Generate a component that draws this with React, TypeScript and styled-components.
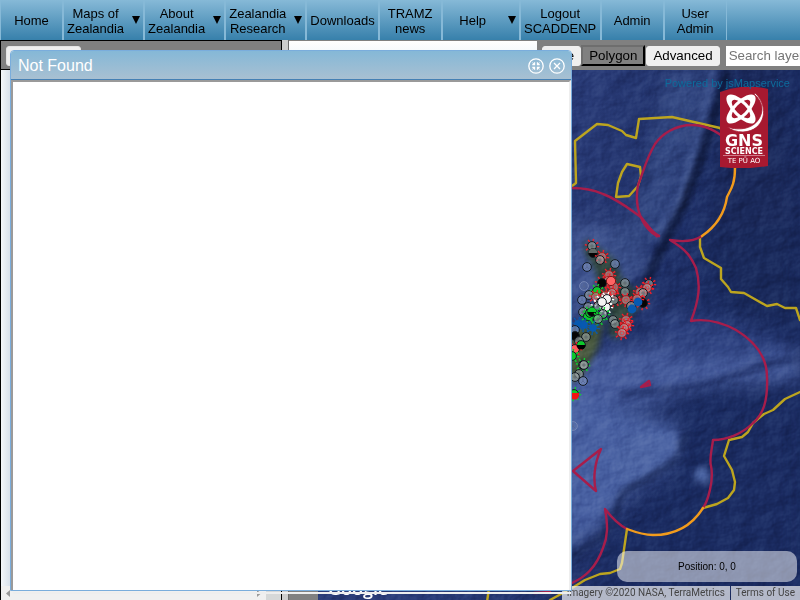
import React from "react";
import styled, { createGlobalStyle, css } from "styled-components";

const GlobalStyle = createGlobalStyle`
  *, *::before, *::after { box-sizing: border-box; }
  html, body, #root { height: 100%; }
  body {
    margin: 0;
    overflow: hidden;
    font-family: "Liberation Sans", Arial, sans-serif;
    font-size: 13px;
    color: #000;
  }
  button, input { font-family: inherit; }
`;

const Page = styled.div`
  position: relative;
  display: flex;
  flex-direction: column;
  height: 100vh;
  overflow: hidden;
  background: #808080;
`;

/* ---------- navigation ---------- */

const NavBar = styled.nav`
  flex: none;
  height: 40px;
  background: linear-gradient(#86b9d7, #3780ab);
`;

const NavList = styled.ul`
  display: flex;
  height: 100%;
  margin: 0;
  padding: 0;
  list-style: none;
`;

const NavItem = styled.li<{ $min?: number }>`
  min-width: ${(p) => p.$min ?? 63}px;
  border: solid #86b9d7;
  border-width: 0 1px;
`;

const NavLink = styled.a`
  display: flex;
  align-items: center;
  height: 100%;
  padding: 2px 3px 1px;
  color: #000;
  line-height: 15px;
  text-decoration: none;
`;

const NavLabel = styled.span`
  flex: 1;
  text-align: center;
  white-space: pre;
`;

const NavArrow = styled.svg`
  flex: none;
  width: 8px;
  height: 8px;
  margin: 0 0 1px 8px;
`;

/* ---------- workspace ---------- */

const Workspace = styled.main`
  flex: 1;
  display: flex;
  min-height: 0;
`;

const LayerPanel = styled.aside`
  flex: 0 0 282px;
  display: flex;
  flex-direction: column;
  border: solid #000;
  border-width: 1px 1px 0 1px;
`;

const PanelHeader = styled.div`
  flex: none;
  height: 29px;
  padding: 5px;
  border-bottom: 1px solid #000;
  background: #808080;
`;

const PanelButton = styled.button`
  width: 75px;
  height: 20px;
  border: 1px solid #e4e4e4;
  border-radius: 3px;
  background: #efefef;
`;

const PanelBody = styled.div`
  flex: 1;
  background: linear-gradient(90deg, #f4f7fa, #cfdae6 12px, #f4f7fa);
`;

const ScrollTrack = styled.div`
  flex: none;
  display: flex;
  align-items: center;
  justify-content: space-between;
  height: 14px;
  padding-left: 5px;
  background: linear-gradient(90deg, #f0f0f0 265px, #d6d8d8 265px);
`;

const ScrollArrow = styled.svg<{ $end?: boolean }>`
  width: 4px;
  height: 7px;
  margin-right: ${(p) => (p.$end ? 20 : 0)}px;
`;

const Splitter = styled.div`
  flex: 0 0 7px;
  border-right: 1px solid #6b6b6b;
  background: #cdcdcd;
`;

const MapColumn = styled.section`
  flex: 1;
  display: flex;
  flex-direction: column;
  min-width: 0;
`;

const Toolbar = styled.div`
  flex: none;
  display: flex;
  align-items: center;
  height: 30px;
  overflow: hidden;
  border-top: 1px solid #808080;
  background: #808080;
`;

const LayerSummary = styled.div`
  flex: none;
  align-self: stretch;
  width: 248px;
  margin-right: 5px;
  background: linear-gradient(#fff, #e2edf6);
`;

const ToolButton = styled.button<{ $pressed?: boolean }>`
  flex: none;
  height: 20px;
  padding: 0 6px;
  border: 1px solid #efefef;
  border-radius: 3px;
  background: #efefef;
  color: #000;
  ${(p) =>
    p.$pressed &&
    css`
      height: 21px;
      margin-right: 1px;
      border: 2px outset #666;
      border-color: #6e6e6e #222 #222 #6e6e6e;
      border-radius: 0;
      background: #808080;
    `}
`;

const SearchInput = styled.input`
  flex: none;
  width: 160px;
  height: 20px;
  margin-left: 6px;
  padding: 0 2px;
  border: 1px solid #fff;
  background: #fff;
  &::placeholder { color: #757575; }
`;

const MapRow = styled.div`
  flex: 1;
  display: flex;
  min-height: 0;
`;

const SideStrip = styled.div`
  flex: 0 0 29px;
  background: #808080;
`;

const MapView = styled.div`
  position: relative;
  flex: 1;
  overflow: hidden;
  background: #1c2c62;
`;

const MapSvg = styled.svg`
  position: absolute;
  inset: 0;
  width: 100%;
  height: 100%;
`;

const PoweredBy = styled.a`
  position: absolute;
  top: 7px;
  right: 10px;
  color: #0d6c9c;
  font-size: 11px;
  line-height: 13px;
  text-decoration: none;
`;

const LogoSvg = styled.svg`
  position: absolute;
  top: 17px;
  right: 32px;
  width: 48px;
  height: 81px;
`;

const GoogleMark = styled.span`
  position: absolute;
  left: 10px;
  bottom: 0;
  color: #fff;
  font: 600 18px/24px "Open Sans", sans-serif;
`;

const PositionBox = styled.div`
  position: absolute;
  right: 3px;
  bottom: 18px;
  width: 180px;
  border-radius: 10px;
  background: rgba(255, 255, 255, 0.5);
  font-size: 10px;
  line-height: 31px;
  text-align: center;
`;

const Attribution = styled.div`
  position: absolute;
  right: 0;
  bottom: 0;
  display: flex;
  gap: 1px;
  color: #444;
  font: 10px/14px Roboto, sans-serif;
  white-space: nowrap;
`;

const AttributionPart = styled.span`
  padding: 0 5px;
  background: rgba(245, 245, 245, 0.7);
`;

const TermsLink = styled.a`
  color: inherit;
  text-decoration: none;
`;

/* ---------- dialog ---------- */

const Dialog = styled.section`
  position: absolute;
  inset: 50px 228px 9px 10px;
  display: flex;
  flex-direction: column;
  border: 1px solid #7aaddc;
  border-radius: 4px 4px 0 0;
  background: #fff;
  &::after {
    content: "";
    position: absolute;
    top: calc(100% + 2px);
    left: 2px;
    right: 0;
    height: 2px;
    background: #eee;
  }
`;

const DialogTitle = styled.header`
  flex: none;
  display: flex;
  align-items: center;
  gap: 5px;
  height: 29px;
  padding: 2px 6px 0 7px;
  border-bottom: 1px solid #4580b4;
  border-radius: 3px 3px 0 0;
  background: linear-gradient(#85b8d7, #a8c0d2);
`;

const Heading = styled.h1`
  flex: 1;
  margin: 0;
  color: #fff;
  font-size: 16px;
  font-weight: 400;
  line-height: 18px;
`;

const IconButton = styled.button`
  display: flex;
  padding: 0;
  border: 0;
  background: none;
`;

const DialogBody = styled.div`
  flex: 1;
  border: solid;
  border-width: 2px 2px 0 2px;
  border-color: #9a9a9a #eee #eee #9a9a9a;
`;

const navItems: { label: string; menu?: boolean; min?: number }[] = [
  { label: "Home" },
  { label: "Maps of\nZealandia", menu: true },
  { label: "About\nZealandia", menu: true },
  { label: "Zealandia\nResearch", menu: true },
  { label: "Downloads" },
  { label: "TRAMZ\nnews" },
  { label: "Help", menu: true, min: 78 },
  { label: "Logout\nSCADDENP", min: 81 },
  { label: "Admin" },
  { label: "User\nAdmin" },
];

/* ---------- map drawing ---------- */

type Kind = "grey" | "pink" | "black" | "green" | "blue" | "white" | "ring" | "red" | "faint";
type Marker = [number, number, Kind, string?];

const fills: Record<Kind, string> = {
  grey: "rgba(160,170,170,.6)",
  pink: "rgba(190,160,160,.65)",
  black: "#050505",
  green: "#0dc92c",
  blue: "#0759b0",
  white: "#f3f3f3",
  ring: "rgba(125,145,190,.65)",
  red: "#ff5a5a",
  faint: "rgba(110,130,180,.3)",
};

const markers: Marker[] = [
  [592, 246, "grey", "red"], [593, 253, "black"], [602, 257, "pink", "red"], [600, 260, "grey"],
  [587, 267, "ring"], [615, 264, "ring"], [584, 286, "faint"], [609, 275, "pink", "red"],
  [608, 281, "pink", "red"], [602, 283, "black", "red"], [614, 287, "pink", "red"],
  [612, 293, "pink", "red"], [625, 283, "grey"], [625, 292, "grey"], [589, 295, "grey"],
  [597, 291, "green", "green"], [596, 297, "pink", "red"], [582, 300, "ring"], [605, 296, "pink", "red"],
  [614, 300, "grey", "red"], [626, 300, "pink", "red"], [649, 284, "grey", "red"],
  [647, 288, "pink", "red"], [640, 292, "pink", "red"], [643, 293, "grey"],
  [643, 303, "black", "red"], [637, 299, "pink", "red"], [631, 306, "grey"],
  [588, 307, "grey"], [583, 312, "grey"], [606, 307, "white", "white"], [601, 302, "white", "white"],
  [607, 299, "white", "white"], [598, 306, "grey", "white"], [602, 302, "white"],
  [588, 316, "green", "green"], [590, 313, "green", "green"], [596, 316, "green", "green"],
  [592, 312, "black"], [603, 314, "grey", "green"],
  [598, 319, "grey", "green"], [613, 320, "grey"], [615, 324, "grey"], [626, 320, "pink", "red"],
  [627, 325, "pink", "red"], [624, 328, "pink", "red"], [622, 333, "pink", "red"],
  [578, 324, "blue", "blue"], [584, 325, "blue", "blue"], [593, 328, "blue", "blue"],
  [575, 330, "ring"], [575, 336, "black"], [586, 337, "grey"], [579, 341, "grey"],
  [581, 345, "green"], [575, 349, "red", "red"], [572, 356, "green", "green"],
  [583, 365, "grey", "green"], [584, 365, "grey"], [579, 374, "grey"], [575, 377, "grey"],
  [583, 381, "ring"], [574, 394, "green", "green"], [573, 426, "faint"],
];

const rayColors: Record<string, string> = {
  red: "#f51f2b", green: "#0ad42f", white: "#fff", blue: "#0759b0",
};

const MarkerDot = ({ marker }: { marker: Marker }) => {
  const [x, y, kind, rays] = marker;
  return (
    <g transform={`translate(${x} ${y})`}>
      {rays && (
        <circle r="5.5" fill="none" stroke={rayColors[rays]} strokeWidth="3.5" strokeDasharray="1.2 3.12" />
      )}
      <circle
        r={kind === "blue" ? 3.4 : 4.4}
        fill={fills[kind]}
        stroke={kind === "blue" ? "#0759b0" : kind === "faint" ? "#7384b3" : kind === "pink" ? "#b3161c" : "#131a22"}
        strokeWidth="1"
      />
      {kind === "grey" && <path d="M-2 0h4M0-2v4" stroke="#596267" strokeWidth=".7" />}
      {kind === "pink" && <circle r="2" fill="none" stroke="#e53438" strokeWidth=".8" />}
      {(kind === "faint" || kind === "ring") && (
        <path d="M0-2.5v2.5l-2 2M0 0l2 2" fill="none" stroke="#56658e" strokeWidth=".7" />
      )}
    </g>
  );
};

const Relief = styled.rect`
  mix-blend-mode: soft-light;
`;

const MapDrawing = () => (
  <MapSvg viewBox="318 70 482 530" preserveAspectRatio="xMaxYMin slice" aria-label="Satellite map of Zealandia">
    <defs>
      <filter id="soft" x="-40%" y="-40%" width="180%" height="180%" colorInterpolationFilters="sRGB">
        <feGaussianBlur stdDeviation="9" />
      </filter>
      <filter id="edge" x="-40%" y="-40%" width="180%" height="180%" colorInterpolationFilters="sRGB">
        <feGaussianBlur stdDeviation="3" />
      </filter>
      <filter id="relief" x="0" y="0" width="100%" height="100%" colorInterpolationFilters="sRGB">
        <feTurbulence type="fractalNoise" baseFrequency="0.04 0.05" numOctaves="5" seed="23" />
        <feColorMatrix values="0 0 0 0 0  0 0 0 0 0  0 0 0 0 0  1 0 0 0 0" />
        <feDiffuseLighting surfaceScale="4" lightingColor="#fff">
          <feDistantLight azimuth="215" elevation="29" />
        </feDiffuseLighting>
      </filter>
      <linearGradient id="sea" x2="1" y2="0.3">
        <stop offset=".5" stopColor="#2a3c78" />
        <stop offset=".9" stopColor="#1b2c62" />
      </linearGradient>
    </defs>

    <rect x="318" y="70" width="482" height="530" fill="url(#sea)" />
    <g filter="url(#soft)">
      <path d="M560 215L620 230 650 260 610 300 560 320Z" fill="#415691" />
      <path d="M668 70h40l-18 70-24 76-38 50-22-20 40-60Z" fill="#354a84" />
      <path d="M738 60l40 0 30 200-70 10-30-60Z" fill="#1b2a5c" />
      <path d="M610 350l80-10 110 12v28l-100 8-60 20-80-10v-40Z" fill="#465c9c" />
      <path d="M640 310l90 10 70 30-120 10Z" fill="#2e4280" />
      <path d="M560 385l60 25 60 15-6 40-48 30-22 30-44 30Z" fill="#4a62a3" />
      <path d="M690 410l110-20v220H600l14-76 60-40Z" fill="#1b2c62" />
      <path d="M700 240l100-20v100l-60 0Z" fill="#1a2a5c" />
    </g>
    <g filter="url(#edge)">
      <circle cx="702" cy="475" r="8" fill="#4d66a4" />
      <path d="M728 70l-12 40-16 52-16 42-20 40-18 38" fill="none" stroke="#0d1738" strokeWidth="7" />
      <path d="M713 70l-14 62-20 66-26 42" fill="none" stroke="#435994" strokeWidth="7" />
      <path d="M688 432l-14 30-22 14-28 16-18 40-34 26" fill="none" stroke="#14224d" strokeWidth="4" />
      <path d="M625 430l50 2 4 20-24 18-30 14-12-20Z" fill="#4d65a4" />
      <path d="M620 394l50-4 40-6 50-18 40-8" fill="none" stroke="#22336a" strokeWidth="6" />
    </g>
    <path
      d="M586 239l14 10 14 10 8 20 14 12 14-10-4 18-14 16-14 24-10-4 2-20-10-18-4-24-12-22Z"
      fill="#30463f" filter="url(#edge)"
    />
    <path d="M604 322l-6 26-16 28-14 8v-50l18-14Z" fill="#46563c" filter="url(#edge)" />
    <Relief x="318" y="70" width="482" height="530" filter="url(#relief)" opacity=".28" />

    <g fill="none" strokeWidth="2.4" strokeLinejoin="round" strokeLinecap="round">
      <g stroke="#bda51f">
        <path d="M572 186l4-3-1-42 22-17 11 1 14 6 4 4 10 3 3-19 33-2 48 11 15 20v20" />
        <path d="M627 164l13 3 1 9-3 10-9 10-13 1 2-14 4-11Z" />
        <path d="M702 236l-2 2v9l4 11 17 10v11l7 8 3 5 13 1 23 13 10-2 8 4h11l4 12" />
        <path d="M800 392l-15 7-12 11-9 4-11 9-5 9-6 5-13 3-5 16 8 14 3 12-1 8-6 8-11 6-14 4" />
        <path d="M627 529l-5 34-2 6-10 4-10 1-15 6-13 8-22 12M489 588l-2 14" />
      </g>
      <g stroke="#a71d4b">
        <path d="M728 141C714 128 703 125 692 125C675 125 662 134 655 144C646 159 643 173 638 185C635 202 639 216 645 225C650 232 654 235 659 236" />
        <path d="M572 188C586 188 594 190 603 194C617 199 631 210 641 217L653 232 659 236" />
        <path d="M702 236C693 242 682 242 670 240C687 250 691 257 696 268C701 285 699 300 691 321C708 318 723 323 736 330C759 344 767 361 767 377C768 402 763 414 753 423C742 434 727 440 713 440C712 449 709 459 711 466C714 480 708 501 703 508" />
        <path d="M627 529C619 525 612 518 605 509C608 526 608 536 603 548C596 568 585 577 572 583" />
        <path d="M601 449l-28 22 23 20C593 480 594 464 601 449ZM641 387l8-6 1 4ZM534 593l16-1" />
        <path d="M646 225l11 11" strokeWidth="3" />
      </g>
      <g stroke="#f29b1c">
        <path d="M735 168C735 184 731 189 727 197C725 211 718 225 702 236" />
        <path d="M703 508C691 527 673 535 653 535C643 535 635 532 627 529" />
      </g>
    </g>

    {markers.map((m, i) => (
      <MarkerDot key={i} marker={m} />
    ))}
    <circle cx="611" cy="281" r="4.6" fill="#ff6464" stroke="#7c1216" />
    <circle cx="638" cy="302" r="4.4" fill="#0759b0" />
    <circle cx="632" cy="309" r="4.4" fill="#0759b0" />
    <path d="M587.500 312a4.500 4.500 0 0 1 9 0Z" fill="#0dc92c" />
    <path d="M576.500 345a4.500 4.500 0 0 0 9 0Z" fill="#000" />
    <path d="M588.500 253a4.500 4.500 0 0 1 9 0Z" fill="#626a68" />
    <path d="M570 393h9v2a4.500 4.500 0 0 1-9 0Z" fill="#f01414" />
  </MapSvg>
);

const ribbon = "M-19 0a19 8 0 1 0 38 0a19 8 0 1 0-38 0ZM-12 0a12 5 0 1 1 24 0a12 5 0 1 1-24 0Z";

const GnsLogo = () => (
  <LogoSvg viewBox="0 0 48 81" role="img" aria-label="GNS Science">
    <path d="M0 5Q24-4 48 2V79Q24 83 0 80Z" fill="#a71930" />
    <g fill="#fff" fillRule="evenodd">
      <path d={ribbon} transform="translate(21 22) rotate(45)" />
      <path d={ribbon} transform="translate(21 22) rotate(-45)" />
    </g>
    <path d="M35 6C50 20 45 44 23 45C17 45 11 43 7 40C20 44 34 42 40 30C44 22 42 14 34 7Z" fill="#fff" stroke="#a71930" strokeWidth=".8" />
    <g fill="#fff" textAnchor="middle" fontFamily="DejaVu Sans, sans-serif" fontWeight="700">
      <text x="24" y="59" fontSize="16">GNS</text>
      <text x="24" y="67" fontSize="8">SCIENCE</text>
      <text x="24" y="76" fontSize="7" fontWeight="400">TE PŪ AO</text>
    </g>
    <path d="M3 68.500h42" stroke="#e2a6b0" strokeWidth=".7" />
  </LogoSvg>
);

export default function App() {
  return (
    <Page>
      <GlobalStyle />
      <NavBar>
        <NavList>
          {navItems.map((item) => (
            <NavItem key={item.label} $min={item.min}>
              <NavLink href="#">
                <NavLabel>{item.label}</NavLabel>
                {item.menu && (
                  <NavArrow viewBox="0 0 8 8" aria-hidden="true">
                    <path d="M0 0h8L4 8Z" />
                  </NavArrow>
                )}
              </NavLink>
            </NavItem>
          ))}
        </NavList>
      </NavBar>

      <Workspace>
        <LayerPanel>
          <PanelHeader>
            <PanelButton type="button" aria-label="Layers" />
          </PanelHeader>
          <PanelBody />
          <ScrollTrack>
            <ScrollArrow viewBox="0 0 4 7" aria-hidden="true">
              <path d="M4 0v7L0 3.500Z" fill="#999" />
            </ScrollArrow>
            <ScrollArrow $end viewBox="0 0 4 7" aria-hidden="true">
              <path d="M0 0v7l4-3.500Z" fill="#999" />
            </ScrollArrow>
          </ScrollTrack>
        </LayerPanel>
        <Splitter />
        <MapColumn>
          <Toolbar>
            <LayerSummary />
            <ToolButton type="button">Line</ToolButton>
            <ToolButton type="button" $pressed aria-pressed="true">Polygon</ToolButton>
            <ToolButton type="button">Advanced</ToolButton>
            <SearchInput type="text" placeholder="Search layers" aria-label="Search layers" />
          </Toolbar>
          <MapRow>
            <SideStrip />
            <MapView>
              <MapDrawing />
              <GnsLogo />
              <PoweredBy href="#">Powered by jsMapservice</PoweredBy>
              <GoogleMark>Google</GoogleMark>
              <PositionBox>Position: 0, 0</PositionBox>
              <Attribution>
                <AttributionPart>Imagery ©2020 NASA, TerraMetrics</AttributionPart>
                <AttributionPart>
                  <TermsLink href="#">Terms of Use</TermsLink>
                </AttributionPart>
              </Attribution>
            </MapView>
          </MapRow>
        </MapColumn>
      </Workspace>

      <Dialog role="dialog" aria-labelledby="dialog-title">
        <DialogTitle>
          <Heading id="dialog-title">Not Found</Heading>
          <IconButton type="button" aria-label="Restore">
            <svg width="16" height="16" viewBox="0 0 16 16" fill="none" stroke="#fff" strokeWidth="1.3">
              <circle cx="8" cy="8" r="7.200" />
              <path d="M4.300 6.500h2.200V4.300M11.700 6.500H9.500V4.300M4.300 9.500h2.200v2.200M11.700 9.500H9.500v2.200" />
              <path d="M4.500 4.500l2 2M11.500 4.500l-2 2M4.500 11.500l2-2M11.500 11.500l-2-2" strokeWidth=".8" />
            </svg>
          </IconButton>
          <IconButton type="button" aria-label="Close">
            <svg width="16" height="16" viewBox="0 0 16 16" fill="none" stroke="#fff" strokeWidth="1.3">
              <circle cx="8" cy="8" r="7.200" />
              <path d="M5 5l6 6M11 5l-6 6" />
            </svg>
          </IconButton>
        </DialogTitle>
        <DialogBody />
      </Dialog>
    </Page>
  );
}
